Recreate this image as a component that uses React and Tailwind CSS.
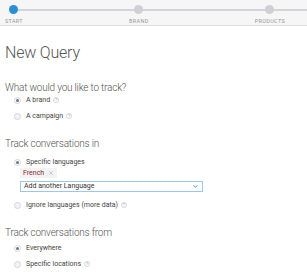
import { ChevronDown, X } from 'lucide-react'

const font = { fontFamily: 'Roboto, "Liberation Sans", sans-serif' }

function Help() {
  return (
    <span className="inline-flex items-center justify-center w-[6px] h-[6px] rounded-full border border-gray-300 text-[4px] leading-none text-gray-400 ml-[3px]">?</span>
  )
}

function Radio({ checked, label, help }) {
  return (
    <div className="flex items-center h-[16px] pl-[9px]">
      <span className={`w-[7px] h-[7px] rounded-full border flex items-center justify-center ${checked ? 'border-gray-300 bg-white' : 'border-gray-300 bg-gray-100'}`}>
        {checked && <span className="w-[3px] h-[3px] rounded-full bg-gray-500" />}
      </span>
      <span className="ml-[5px] text-[7px] text-[#444]">{label}</span>
      {help && <Help />}
    </div>
  )
}

function Heading({ children, className }) {
  return <h2 className={`h-[12px] leading-[12px] text-[10px] font-light tracking-[-0.2px] text-[#555] ${className}`}>{children}</h2>
}

function Step({ label }) {
  return (
    <div className="flex flex-col items-center">
      <span className="w-[9px] h-[9px] rounded-full bg-[#cfcfd4]" />
      <span className="mt-[3px] text-[5.5px] tracking-[0.3px] text-[#999]">{label}</span>
    </div>
  )
}

export default function App() {
  return (
    <div className="w-[307px] h-[280px] bg-white overflow-hidden" style={font}>
      <div className="relative h-[26px] bg-[#f6f6f7] border-b border-[#e2e2e4]">
        <div className="absolute left-[13px] right-0 top-[9px] h-[2px] bg-[#d3d3d8]" />
        <div className="relative flex justify-between pt-[5px] pl-[5px] pr-[22px]">
          <div className="flex flex-col items-start">
            <span className="ml-[4px] w-[9px] h-[9px] rounded-full bg-[#2b8fd6]" />
            <span className="mt-[3px] text-[5.5px] tracking-[0.3px] text-[#999]">START</span>
          </div>
          <Step label="BRAND" />
          <Step label="PRODUCTS" />
        </div>
      </div>

      <div className="px-[5px]">
        <h1 className="mt-[16px] h-[22px] leading-[22px] text-[16px] font-light tracking-[-0.2px] text-[#555]">New Query</h1>

        <Heading className="mt-[18px]">What would you like to track?</Heading>
        <div className="-mt-[2px]">
          <Radio checked label="A brand" help />
          <Radio label="A campaign" help />
        </div>

        <Heading className="mt-[14px]">Track conversations in</Heading>
        <div className="mt-[4px]">
          <Radio checked label="Specific languages" />
          <div className="pl-[15px] -mt-[2px]">
            <div className="flex">
              <span className="flex items-center h-[10px] px-[3px] bg-[#f3f3f3] text-[7px] text-[#8b2a2a]">
                French
                <X size={6} strokeWidth={2} className="ml-[4px] text-gray-400" />
              </span>
            </div>
            <div className="mt-[3px] w-[183px] h-[11px] border border-[#9cc6ea] flex items-center justify-between px-[3px] bg-white">
              <span className="text-[7px] text-[#333]">Add another Language</span>
              <ChevronDown size={7} strokeWidth={3} className="text-[#3b8fd0]" />
            </div>
          </div>
          <div className="mt-[5px]">
            <Radio label="Ignore languages (more data)" help />
          </div>
        </div>

        <Heading className="mt-[14px]">Track conversations from</Heading>
        <div className="mt-[1px]">
          <Radio checked label="Everywhere" />
          <Radio label="Specific locations" help />
        </div>
      </div>
    </div>
  )
}
